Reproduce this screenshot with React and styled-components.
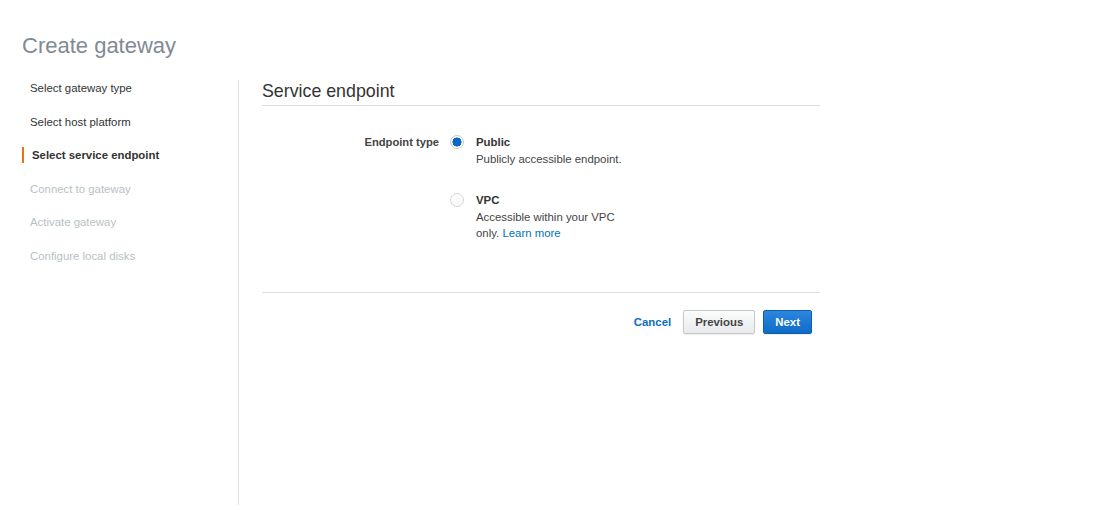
import styled, { createGlobalStyle } from "styled-components";

const GlobalStyle = createGlobalStyle`
  body {
    margin: 0;
    background: #fff;
    font-family: "Liberation Sans", Arial, sans-serif;
    color: #444;
  }
`;

const Page = styled.div`
  padding: 0 22px;
`;

const Title = styled.h1`
  margin: 0;
  padding-top: 33px;
  height: 80px;
  box-sizing: border-box;
  font-size: 22px;
  line-height: 26px;
  font-weight: 400;
  color: #818a94;
`;

const Body = styled.div`
  display: flex;
`;

const Nav = styled.nav`
  width: 216px;
  height: 425px;
  border-right: 1px solid #e1e4e6;
  display: flex;
  flex-direction: column;
  gap: 17.6px;
`;

const NavItem = styled.div`
  font-size: 11.4px;
  line-height: 16px;
  padding-left: 8px;
  color: ${(p) => (p.$disabled ? "#b7bfc4" : "#333")};
  font-weight: ${(p) => (p.$active ? 700 : 400)};
  border-left: ${(p) => (p.$active ? "2px solid #ec7211" : "none")};
`;

const Main = styled.main`
  width: 558px;
  margin-left: 23px;
`;

const SectionHeader = styled.h2`
  margin: 0;
  font-size: 17.8px;
  line-height: 22px;
  font-weight: 400;
  color: #333;
  padding-bottom: 3px;
  border-bottom: 1px solid #dcdfe2;
`;

const FormRow = styled.div`
  display: flex;
  margin-top: 28px;
`;

const Label = styled.div`
  width: 177px;
  text-align: right;
  font-size: 11.2px;
  line-height: 16px;
  font-weight: 700;
  color: #444;
`;

const Options = styled.div`
  margin-left: 11px;
  display: flex;
  flex-direction: column;
  gap: 25px;
`;

const Option = styled.label`
  display: flex;
  align-items: flex-start;
`;

const Radio = styled.span`
  flex: none;
  width: 14px;
  height: 14px;
  margin-top: 1px;
  box-sizing: border-box;
  border-radius: 50%;
  border: 1px solid ${(p) => (p.$checked ? "#c3ccd6" : "#d3d6d9")};
  background: ${(p) =>
    p.$checked
      ? "radial-gradient(circle, #0b68c6 0 4.3px, #fff 4.8px)"
      : "linear-gradient(#fff, #f7f7f7)"};
`;

const OptionText = styled.div`
  margin-left: 12px;
  width: 152px;
  font-size: 11.4px;
  line-height: 16.5px;
  color: #444;
`;

const OptionTitle = styled.div`
  font-weight: 700;
  color: #333;
`;

const Link = styled.a`
  color: #0073bb;
  text-decoration: none;
`;

const Footer = styled.div`
  margin-top: 50px;
  border-top: 1px solid #dcdfe2;
  padding: 17px 8px 0 0;
  display: flex;
  justify-content: flex-end;
  align-items: center;
`;

const CancelLink = styled.a`
  font-size: 11.4px;
  font-weight: 700;
  color: #0b6cc4;
  margin-right: 12px;
`;

const Button = styled.button`
  height: 24px;
  padding: 0 11px;
  margin-left: ${(p) => (p.$primary ? "8px" : "0")};
  border-radius: 2px;
  font-family: inherit;
  font-size: 11.4px;
  font-weight: 700;
  color: ${(p) => (p.$primary ? "#fff" : "#444")};
  border: 1px solid ${(p) => (p.$primary ? "#1160b0" : "#c6c9cc")};
  background: ${(p) =>
    p.$primary
      ? "linear-gradient(#2d86de, #0e6bc6)"
      : "linear-gradient(#fcfcfc, #e8eaec)"};
  box-shadow: 0 1px 1px rgba(0, 0, 0, 0.08);
`;

const steps = [
  { label: "Select gateway type" },
  { label: "Select host platform" },
  { label: "Select service endpoint", active: true },
  { label: "Connect to gateway", disabled: true },
  { label: "Activate gateway", disabled: true },
  { label: "Configure local disks", disabled: true },
];

export default function App() {
  return (
    <>
      <GlobalStyle />
      <Page>
        <Title>Create gateway</Title>
        <Body>
          <Nav>
            {steps.map((s) => (
              <NavItem key={s.label} $active={s.active} $disabled={s.disabled}>
                {s.label}
              </NavItem>
            ))}
          </Nav>
          <Main>
            <SectionHeader>Service endpoint</SectionHeader>
            <FormRow>
              <Label>Endpoint type</Label>
              <Options>
                <Option>
                  <Radio $checked />
                  <OptionText>
                    <OptionTitle>Public</OptionTitle>
                    Publicly accessible endpoint.
                  </OptionText>
                </Option>
                <Option>
                  <Radio />
                  <OptionText>
                    <OptionTitle>VPC</OptionTitle>
                    Accessible within your VPC only. <Link>Learn more</Link>
                  </OptionText>
                </Option>
              </Options>
            </FormRow>
            <Footer>
              <CancelLink>Cancel</CancelLink>
              <Button>Previous</Button>
              <Button $primary>Next</Button>
            </Footer>
          </Main>
        </Body>
      </Page>
    </>
  );
}
